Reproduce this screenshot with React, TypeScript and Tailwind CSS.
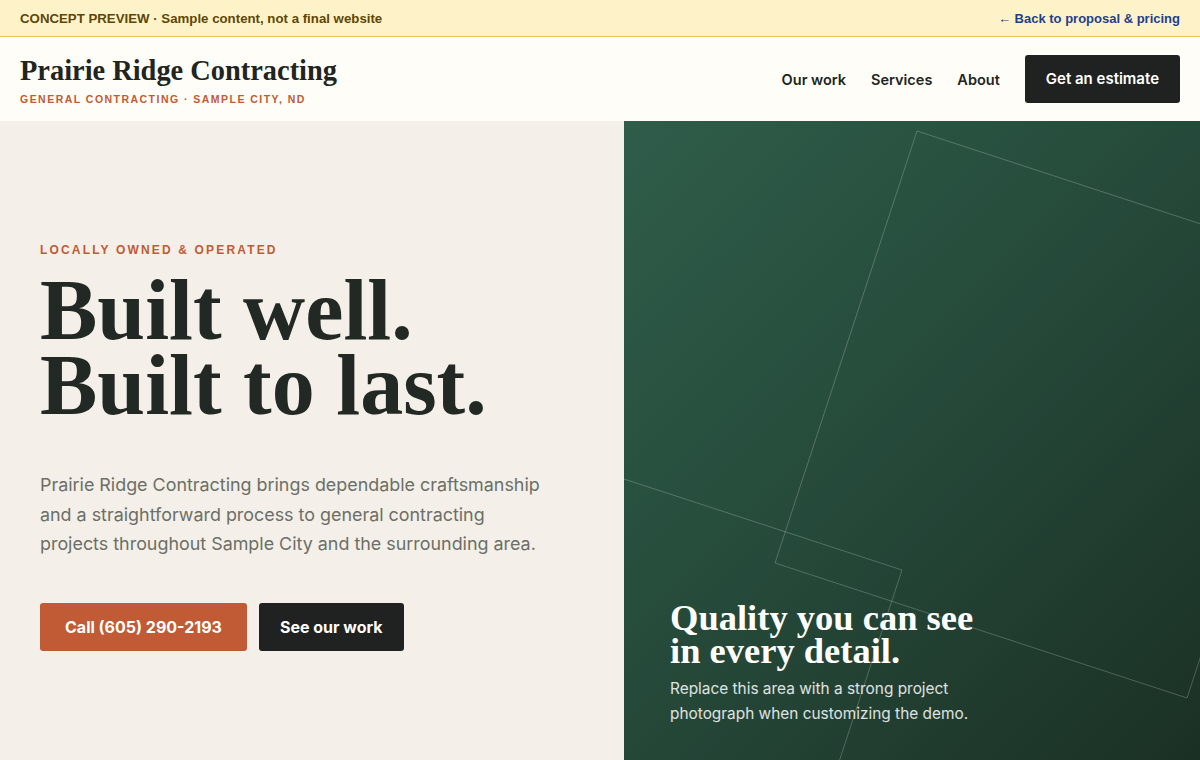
import React from "react";

const serif = { fontFamily: '"Liberation Serif", Georgia, "Times New Roman", serif' };
const sans = { fontFamily: 'Inter, "Noto Sans", sans-serif' };
const arial = { fontFamily: '"Liberation Sans", Arial, sans-serif' };

function PreviewBanner() {
  return (
    <div
      className="flex h-[37px] items-center justify-between border-b border-[#e8c55f] bg-[#fef3c8] px-5 pt-[1px] text-[13.25px] font-bold"
      style={arial}
    >
      <span className="text-[#5e4706]">CONCEPT PREVIEW · Sample content, not a final website</span>
      <a href="#" className="text-[13px] text-[#1e3f8f]">← Back to proposal &amp; pricing</a>
    </div>
  );
}

function SiteNav() {
  return (
    <header className="flex h-[84px] items-center justify-between bg-[#fffdf8] px-5">
      <div className="flex flex-col pt-[4px]">
        <span className="text-[28.4px] font-bold leading-none text-[#202521]" style={serif}>
          Prairie Ridge Contracting
        </span>
        <span
          className="mt-[9px] text-[10.5px] font-bold uppercase leading-none tracking-[0.14em] text-[#c05b35]"
          style={arial}
        >
          General Contracting · Sample City, ND
        </span>
      </div>
      <nav className="flex items-center gap-[25px] text-[14.5px] font-semibold text-[#202521]" style={sans}>
        <a href="#" className="pt-[1px]">Our work</a>
        <a href="#" className="pt-[1px]">Services</a>
        <a href="#" className="pt-[1px]">About</a>
        <a href="#" className="flex h-[48px] items-center rounded-[3px] bg-[#1f2220] px-[21px] text-[15px] text-white">
          Get an estimate
        </a>
      </nav>
    </header>
  );
}

function HeroCopy() {
  return (
    <div className="flex flex-col bg-[#f4efe8] pl-10 pt-[123px]">
      <span
        className="text-[12px] font-bold uppercase leading-none tracking-[0.18em] text-[#c05b35]"
        style={arial}
      >
        Locally owned &amp; operated
      </span>
      <h1 className="mt-[17px] text-[86px] font-bold leading-[75px] text-[#222823]" style={serif}>
        Built well.
        <br />
        Built to last.
      </h1>
      <p className="mt-[47px] w-[505px] text-[17.9px] leading-[29.6px] text-[#6b6f67]" style={sans}>
        Prairie Ridge Contracting brings dependable craftsmanship and a straightforward process to general
        contracting projects throughout Sample City and the surrounding area.
      </p>
      <div className="mt-[44px] flex gap-3 text-[16px] font-bold text-white" style={sans}>
        <a href="#" className="flex h-[48px] items-center rounded-[3px] bg-[#c05b35] px-[25px]">
          Call (605) 290-2193
        </a>
        <a href="#" className="flex h-[48px] items-center rounded-[3px] bg-[#1f2220] px-[21px]">
          See our work
        </a>
      </div>
    </div>
  );
}

function FeaturePanel() {
  return (
    <div className="relative flex flex-col justify-end overflow-hidden bg-[linear-gradient(135deg,#2f5d4a_0%,#264b3b_45%,#1b3025_100%)] px-[46px] pb-[34px]">
      {/* outlined blueprint frames */}
      <svg className="absolute inset-0 h-full w-full" fill="none">
        <polygon
          points="293,10 705,145 563,577 151,442"
          stroke="rgba(255,255,255,0.22)"
          strokeWidth="1"
        />
        <polygon
          points="278,449 -197,293.5 -353,768.5 122,924"
          stroke="rgba(255,255,255,0.22)"
          strokeWidth="1"
        />
      </svg>
      <div className="relative">
        <h2 className="text-[36.5px] font-bold leading-[33px] text-white" style={serif}>
          Quality you can see
          <br />
          in every detail.
        </h2>
        <p className="mt-[9px] w-[320px] text-[15.4px] leading-[25px] text-white/85" style={sans}>
          Replace this area with a strong project photograph when customizing the demo.
        </p>
      </div>
    </div>
  );
}

export default function App() {
  return (
    <div className="min-h-[760px] w-full bg-[#f4efe8]">
      <PreviewBanner />
      <SiteNav />
      <section className="grid h-[639px] grid-cols-[624px_1fr]">
        <HeroCopy />
        <FeaturePanel />
      </section>
    </div>
  );
}
